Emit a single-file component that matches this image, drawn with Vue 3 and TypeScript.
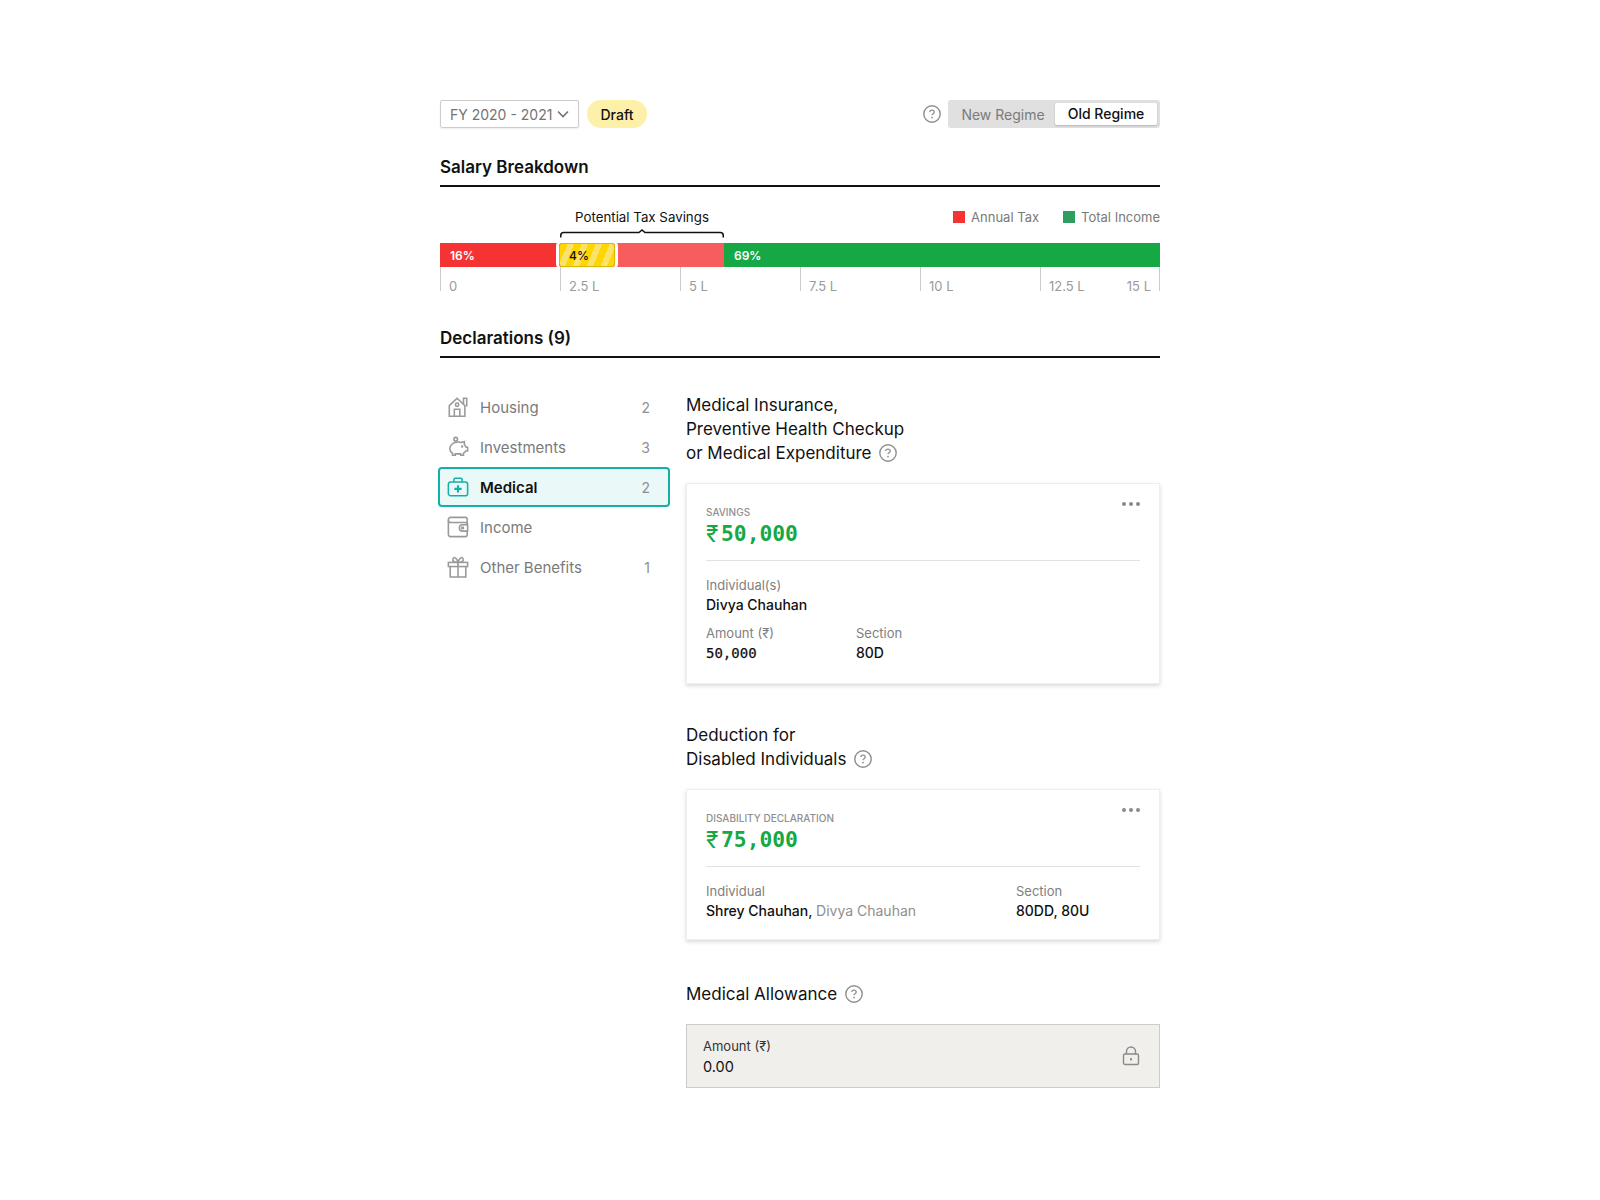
<script setup lang="ts">
interface NavItem { label: string; count: number | null; icon: string; active?: boolean }
const nav: NavItem[] = [
  { label: 'Housing', count: 2, icon: 'house' },
  { label: 'Investments', count: 3, icon: 'piggy' },
  { label: 'Medical', count: 2, icon: 'medical', active: true },
  { label: 'Income', count: null, icon: 'wallet' },
  { label: 'Other Benefits', count: 1, icon: 'gift' },
]
const ticks = ['0', '2.5 L', '5 L', '7.5 L', '10 L', '12.5 L']
</script>

<template>
  <main class="page">
    <header class="toolbar">
      <div class="left">
        <div class="select">
          <span>FY 2020 - 2021</span>
          <svg class="chev" width="12" height="8" viewBox="0 0 12 8" fill="none"><path d="M1 1.5l5 5 5-5" stroke="#737373" stroke-width="1.6"/></svg>
        </div>
        <span class="draft">Draft</span>
      </div>
      <div class="right">
        <svg class="help" viewBox="0 0 18 18" fill="none"><circle cx="9" cy="9" r="8.2" stroke="#8f8f8f" stroke-width="1.4"/><path d="M6.8 7.1c0-1.2 1-2 2.2-2s2.2.8 2.2 1.9c0 1.7-2.2 1.7-2.2 3.3" stroke="#8f8f8f" stroke-width="1.3"/><circle cx="9" cy="12.6" r=".9" fill="#8f8f8f"/></svg>
        <div class="toggle">
          <span class="off">New Regime</span>
          <span class="on">Old Regime</span>
        </div>
      </div>
    </header>

    <h2 class="section first">Salary Breakdown</h2>

    <section class="chart">
      <div class="legend">
        <span class="key"><i class="sq red"></i>Annual Tax</span>
        <span class="key"><i class="sq green"></i>Total Income</span>
      </div>
      <div class="bar">
        <span class="seg s1">16%</span>
        <span class="seg s2"></span>
        <span class="seg s3">69%</span>
        <div class="savings">
          <span class="savings-label">Potential Tax Savings</span>
          <svg width="164" height="9" viewBox="0 0 164 9" fill="none"><path d="M.75 8.5V6.5a3 3 0 0 1 3-3H79l3-2.5 3 2.5h75.25a3 3 0 0 1 3 3v2" stroke="#111" stroke-width="1.5"/></svg>
        </div>
        <span class="chip">4%</span>
      </div>
      <div class="ticks">
        <span v-for="t in ticks" :key="t" class="tick">{{ t }}<em v-if="t === '12.5 L'">15 L</em></span>
      </div>
    </section>

    <h2 class="section second">Declarations (9)</h2>

    <section class="body">
      <nav class="side">
        <a v-for="n in nav" :key="n.label" class="row" :class="{ active: n.active }">
          <svg class="ico" viewBox="0 0 24 24" fill="none" :stroke="n.active ? '#12b0a8' : '#999'" stroke-width="1.7">
            <template v-if="n.icon === 'house'">
              <path d="M2.5 10.5L11 2.5l8.5 8v11.5h-17z"/><path d="M18 8.5V2.5h3.5V11.5"/><circle cx="11" cy="9.5" r="1.8"/><path d="M8 22v-7.5h6V22"/>
            </template>
            <template v-else-if="n.icon === 'piggy'">
              <path d="M3 14c0-4 4-7.5 9-7.5 1.5 0 2.5.2 3.5.6L19 6v3.5c1 1 1.5 2 1.8 2.8h1.7v4h-2c-.6 1-1.5 2-2.5 2.5V21h-3v-1.5H9V21H6v-2.200C4 17.500 3 16 3 14z"/><circle cx="9.5" cy="3.5" r="2"/><circle cx="16.5" cy="11.5" r=".5"/>
            </template>
            <template v-else-if="n.icon === 'medical'">
              <rect x="1.5" y="6.5" width="21" height="15" rx="2.5"/><path d="M7.5 6.5V4a1.5 1.5 0 0 1 1.5-1.5h6A1.5 1.5 0 0 1 16.5 4v2.5"/><path d="M12 10v8M8 14h8" stroke-width="2.3"/>
            </template>
            <template v-else-if="n.icon === 'wallet'">
              <path d="M22 9V3.5a2 2 0 0 0-2-2H4a2.5 2.5 0 0 0-2.5 2.5v16A2.5 2.5 0 0 0 4 22.5h16a2 2 0 0 0 2-2V17"/><path d="M1.5 4.5A2.5 2.5 0 0 0 4 7h16a2 2 0 0 1 2 2"/><path d="M22.5 9.5H17a3.5 3.5 0 0 0 0 7h5.5z"/><circle cx="17" cy="13" r="1"/>
            </template>
            <template v-else>
              <rect x="1.5" y="7" width="21" height="4.5"/><path d="M3.5 11.5V23h17V11.5M12 7v16"/><path d="M12 7C8 7 5.5 5.5 6.5 3s4-1.5 5.500 4c1.500-5.500 4.500-6.500 5.500-4s-1.500 4-5.500 4z"/>
            </template>
          </svg>
          <span class="name">{{ n.label }}</span>
          <span class="count">{{ n.count }}</span>
        </a>
      </nav>

      <div class="content">
        <h3 class="title">Medical Insurance,<br />Preventive Health Checkup<br />or Medical Expenditure
          <svg class="help inline" viewBox="0 0 18 18" fill="none"><circle cx="9" cy="9" r="8.2" stroke="#8f8f8f" stroke-width="1.4"/><path d="M6.8 7.1c0-1.2 1-2 2.2-2s2.2.8 2.2 1.9c0 1.7-2.2 1.7-2.2 3.3" stroke="#8f8f8f" stroke-width="1.3"/><circle cx="9" cy="12.6" r=".9" fill="#8f8f8f"/></svg>
        </h3>
        <article class="card">
          <span class="dots"><i></i><i></i><i></i></span>
          <div class="eyebrow">SAVINGS</div>
          <div class="money"><span class="rs">₹</span>50,000</div>
          <hr />
          <div class="field"><label>Individual(s)</label><b>Divya Chauhan</b></div>
          <div class="pair">
            <div class="field narrow"><label>Amount (₹)</label><b class="mono">50,000</b></div>
            <div class="field"><label>Section</label><b>80D</b></div>
          </div>
        </article>

        <h3 class="title gap">Deduction for<br />Disabled Individuals
          <svg class="help inline" viewBox="0 0 18 18" fill="none"><circle cx="9" cy="9" r="8.2" stroke="#8f8f8f" stroke-width="1.4"/><path d="M6.8 7.1c0-1.2 1-2 2.2-2s2.2.8 2.2 1.9c0 1.7-2.2 1.7-2.2 3.3" stroke="#8f8f8f" stroke-width="1.3"/><circle cx="9" cy="12.6" r=".9" fill="#8f8f8f"/></svg>
        </h3>
        <article class="card short">
          <span class="dots"><i></i><i></i><i></i></span>
          <div class="eyebrow">DISABILITY DECLARATION</div>
          <div class="money"><span class="rs">₹</span>75,000</div>
          <hr />
          <div class="pair spread">
            <div class="field wide"><label>Individual</label><b>Shrey Chauhan, <s>Divya Chauhan</s></b></div>
            <div class="field"><label>Section</label><b>80DD, 80U</b></div>
          </div>
        </article>

        <h3 class="title gap2">Medical Allowance
          <svg class="help inline" viewBox="0 0 18 18" fill="none"><circle cx="9" cy="9" r="8.2" stroke="#8f8f8f" stroke-width="1.4"/><path d="M6.8 7.1c0-1.2 1-2 2.2-2s2.2.8 2.2 1.9c0 1.7-2.2 1.7-2.2 3.3" stroke="#8f8f8f" stroke-width="1.3"/><circle cx="9" cy="12.6" r=".9" fill="#8f8f8f"/></svg>
        </h3>
        <div class="locked">
          <div class="locked-text"><label>Amount (₹)</label><b>0.00</b></div>
          <svg width="18" height="20" viewBox="0 0 18 20" fill="none" stroke="#8a8a8a" stroke-width="1.4"><rect x="1.5" y="8" width="15" height="10.5" rx="1.5"/><path d="M4.5 8V5.5a4.5 4.5 0 0 1 9 0V8"/><path d="M9 12v2.5" stroke-width="1.8"/></svg>
        </div>
      </div>
    </section>
  </main>
</template>

<style scoped>
.page {
  box-sizing: border-box;
  width: 720px;
  margin: 0 auto;
  padding-top: 100px;
  font-family: Inter, "Liberation Sans", sans-serif;
  color: #111;
}
.toolbar { display: flex; justify-content: space-between; align-items: center; height: 28px; }
.left, .right { display: flex; align-items: center; }
.select {
  box-sizing: border-box; display: flex; align-items: center; gap: 5px; height: 28px; width: 139px;
  padding: 0 9px; border: 1px solid #ccc; border-radius: 2px; font-size: 14px; color: #737373;
  box-shadow: 0 1px 2px rgba(0,0,0,.08); white-space: nowrap;
}
.chev { flex: none; }
.draft { display: flex; align-items: center; height: 28px; margin-left: 8px; padding: 0 13.5px; border-radius: 14px; background: #fdf0a8; font-size: 14px; font-weight: 500; }
.help { width: 18px; height: 18px; }
.right .help { margin-right: 7px; }
.toggle { box-sizing: border-box; display: flex; align-items: center; width: 212px; height: 28px; padding: 3px; background: #e0e0e0; border-radius: 3px; font-size: 14px; }
.off { flex: 1; text-align: center; color: #7a7a7a; }
.on { width: 102px; height: 22px; line-height: 22px; text-align: center; background: #fff; border-radius: 2px; box-shadow: 0 1px 2px rgba(0,0,0,.2); font-weight: 500; }
.section { margin: 0; height: 22px; line-height: 22px; padding-bottom: 7px; border-bottom: 2px solid #111; font-size: 17px; font-weight: 600; box-sizing: content-box; }
.section.first { margin-top: 28px; }
.section.second { margin-top: 36px; }
.chart { padding-top: 20px; }
.legend { display: flex; justify-content: flex-end; gap: 24px; height: 20px; line-height: 20px; font-size: 13px; color: #7a7a7a; }
.key { display: flex; align-items: center; gap: 6px; }
.sq { width: 12px; height: 12px; }
.sq.red { background: #f53333; }
.sq.green { background: #2e9e60; }
.bar { position: relative; display: flex; height: 24px; margin-top: 16px; font-size: 12px; font-weight: 600; color: #fff; }
.seg { box-sizing: border-box; line-height: 25px; padding-left: 10px; }
.s1 { width: 120px; background: #f53333; }
.s2 { width: 164px; background: #f75d5d; }
.s3 { flex: 1; background: #16a845; }
.savings { position: absolute; left: 120px; bottom: 29px; width: 164px; display: flex; flex-direction: column; align-items: center; gap: 4px; color: #111; font-weight: 400; }
.savings-label { font-size: 13.3px; white-space: nowrap; line-height: 16px; }
.chip {
  position: absolute; left: 119px; top: 0; box-sizing: border-box; width: 56px; height: 24px; line-height: 23px;
  padding-left: 9px; color: #111; font-weight: 500; border: 1px solid #d9b800; border-radius: 3px; box-shadow: 0 0 0 3px #fff;
  background: repeating-linear-gradient(112deg, #ffd600 0 7px, #fbe36b 7px 13px);
}
.ticks { display: grid; grid-template-columns: repeat(6, 120px); height: 24px; border-right: 1px solid #ccc; }
.tick { position: relative; box-sizing: border-box; height: 24px; border-left: 1px solid #ccc; padding: 11px 0 0 8px; font-size: 13px; line-height: 17px; color: #9a9a9a; }
.tick em { position: absolute; right: 9px; top: 11px; font-style: normal; }
.body { display: flex; align-items: flex-start; margin-top: 29px; }
.side { width: 228px; flex: none; display: flex; flex-direction: column; }
.row { display: flex; align-items: center; height: 40px; padding: 0 18px 0 7px; font-size: 15px; color: #7a7a7a; box-sizing: border-box; }
.row.active { margin: 0 -2px; padding: 0 18px 0 7px; background: #ebf8f8; border: 2px solid #12b0a8; border-radius: 4px; color: #111; font-weight: 600; }
.ico { width: 22px; height: 22px; margin-right: 11px; flex: none; }
.name { flex: 1; }
.count { font-size: 14px; font-weight: 400; color: #8f8f8f; }
.content { width: 474px; margin: 6px 0 0 18px; }
.title { margin: 0; font-size: 17px; line-height: 24px; font-weight: 400; }
.title.gap { margin-top: 39px; }
.title.gap2 { margin-top: 42px; }
.help.inline { margin-left: 3px; vertical-align: -3px; }
.card { position: relative; box-sizing: border-box; margin-top: 18px; padding: 22px 19px 20px; background: #fff; border: 1px solid #eee; box-shadow: 0 2px 4px rgba(0,0,0,.15); }
.card.short { padding-bottom: 18px; }
.dots { position: absolute; top: 18px; right: 19px; display: flex; gap: 3px; }
.dots i { width: 4px; height: 4px; border-radius: 50%; background: #8a8a8a; }
.eyebrow { font-size: 10px; line-height: 13px; font-weight: 500; color: #8f8f8f; }
.money { font-family: "DejaVu Sans Mono", monospace; font-weight: 700; font-size: 21.3px; line-height: 28px; padding-top: 1px; color: #16a845; display: flex; align-items: center; }
.rs { font-family: Inter, sans-serif; font-weight: 400; font-size: 23px; width: 15px; }
hr { margin: 12px 0 0; border: 0; border-top: 1px solid #e2e2e2; }
.field { display: flex; flex-direction: column; }
.field label { font-size: 13px; line-height: 20px; color: #808080; }
.field b { font-size: 14px; line-height: 20px; font-weight: 500; color: #111; }
.field b.mono { font-family: "DejaVu Sans Mono", monospace; font-size: 14px; font-weight: 400; -webkit-text-stroke: .25px #111; }
.field b s { text-decoration: none; font-weight: 400; color: #8f8f8f; }
.card > .field { margin-top: 14px; }
.pair { display: flex; margin-top: 8px; }
.narrow { width: 150px; }
.spread { margin-top: 14px; }
.wide { width: 310px; }
.locked { box-sizing: border-box; display: flex; justify-content: space-between; align-items: center; height: 64px; margin-top: 18px; padding: 0 19px 0 16px; background: #f0efec; border: 1px solid #ccc; }
.locked-text { display: flex; flex-direction: column; padding-top: 2px; }
.locked label { font-size: 13px; line-height: 20px; color: #333; }
.locked b { font-size: 14.5px; font-weight: 400; line-height: 22px; }
</style>
